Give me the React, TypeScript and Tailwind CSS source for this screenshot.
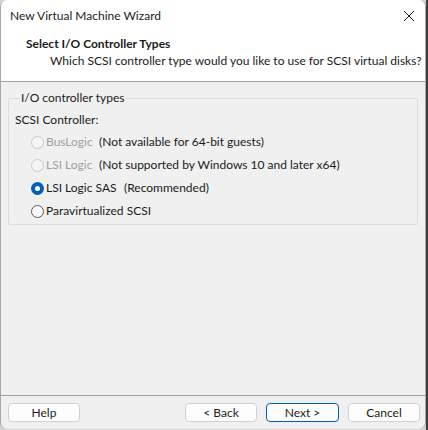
import React from 'react';

type Option = {
  label: string;
  note: string;
  disabled?: boolean;
  checked?: boolean;
};

const options: Option[] = [
  { label: 'BusLogic', note: '(Not available for 64-bit guests)', disabled: true },
  { label: 'LSI Logic', note: '(Not supported by Windows 10 and later x64)', disabled: true },
  { label: 'LSI Logic SAS', note: '(Recommended)', checked: true },
  { label: 'Paravirtualized SCSI', note: '' },
];

function Radio({ checked, disabled }: { checked?: boolean; disabled?: boolean }) {
  if (checked) {
    return (
      <span className="flex h-[13px] w-[13px] shrink-0 items-center justify-center rounded-full bg-[#005fb8]">
        <span className="h-[5px] w-[5px] rounded-full bg-white" />
      </span>
    );
  }
  return (
    <span
      className={
        disabled
          ? 'h-[13px] w-[13px] shrink-0 rounded-full border border-[#c8c8c8] bg-[#f5f5f5]'
          : 'h-[13px] w-[13px] shrink-0 rounded-full border border-[#5a5a5a] bg-[#f9f9f9]'
      }
    />
  );
}

function Button({ children, primary }: { children: React.ReactNode; primary?: boolean }) {
  return (
    <button
      className={
        primary
          ? 'h-[19px] w-[73px] rounded-[4px] border border-[#005fb8] bg-[#fdfdfd] text-[12px] leading-none text-[#1b1b1b]'
          : 'h-[19px] w-[72px] rounded-[4px] border border-[#d0d0d0] bg-[#fdfdfd] text-[12px] leading-none text-[#1b1b1b]'
      }
    >
      {children}
    </button>
  );
}

export default function App() {
  return (
    <div
      className="flex h-[430px] w-[428px] border-r-2 border-[#3c3c3c] bg-[#d4d4d4]"
      style={{ fontFamily: 'Lato, "Liberation Sans", sans-serif' }}
    >
      <div className="flex h-[429px] w-[426px] flex-col overflow-hidden rounded-[7px] border-x border-[#a8a8a8] bg-[#f0f0f0] text-[12px] text-[#1b1b1b]">
        {/* title bar */}
        <div className="flex h-[31px] shrink-0 items-center justify-between bg-white pl-[9px] pr-[9px]">
          <span>New Virtual Machine Wizard</span>
          <svg width="12" height="12" viewBox="0 0 12 12" className="mr-[1px]">
            <path d="M1 1 L11 11 M11 1 L1 11" stroke="#1b1b1b" strokeWidth="1" />
          </svg>
        </div>

        {/* header */}
        <div className="flex h-[51px] shrink-0 flex-col border-b border-[#a0a0a0] bg-white pt-[5px]">
          <div className="pl-[25px] font-bold leading-[16px]">Select I/O Controller Types</div>
          <div className="pl-[49px] pt-[1px] leading-[16px]">
            Which SCSI controller type would you like to use for SCSI virtual disks?
          </div>
        </div>

        {/* body */}
        <div className="flex-1 px-[7px] pt-[8px]">
          <fieldset className="h-[135px] rounded-[2px] border border-[#dcdcdc] pl-[6px]">
            <legend className="ml-[5px] px-[1px] leading-[16px]">I/O controller types</legend>
            <div className="pt-[6px] leading-[16px]">SCSI Controller:</div>
            <div className="flex flex-col gap-[7px] pl-[16px] pt-[6px]">
              {options.map((o) => (
                <div key={o.label} className="flex h-[16px] items-center">
                  <Radio checked={o.checked} disabled={o.disabled} />
                  <span
                    className={
                      o.disabled
                        ? 'ml-[2px] w-[53px] text-[#a0a0a0]'
                        : o.checked
                          ? 'ml-[2px] w-[78px]'
                          : 'ml-[2px]'
                    }
                  >
                    {o.label}
                  </span>
                  {o.note && <span>{o.note}</span>}
                </div>
              ))}
            </div>
          </fieldset>
        </div>

        {/* footer */}
        <div className="flex h-[34px] shrink-0 items-start border-t border-[#a0a0a0] pl-[7px] pr-[5px] pt-[7px]">
          <Button>Help</Button>
          <div className="ml-auto flex gap-[9px]">
            <Button>&lt; Back</Button>
            <Button primary>Next &gt;</Button>
            <Button>Cancel</Button>
          </div>
        </div>
      </div>
    </div>
  );
}
